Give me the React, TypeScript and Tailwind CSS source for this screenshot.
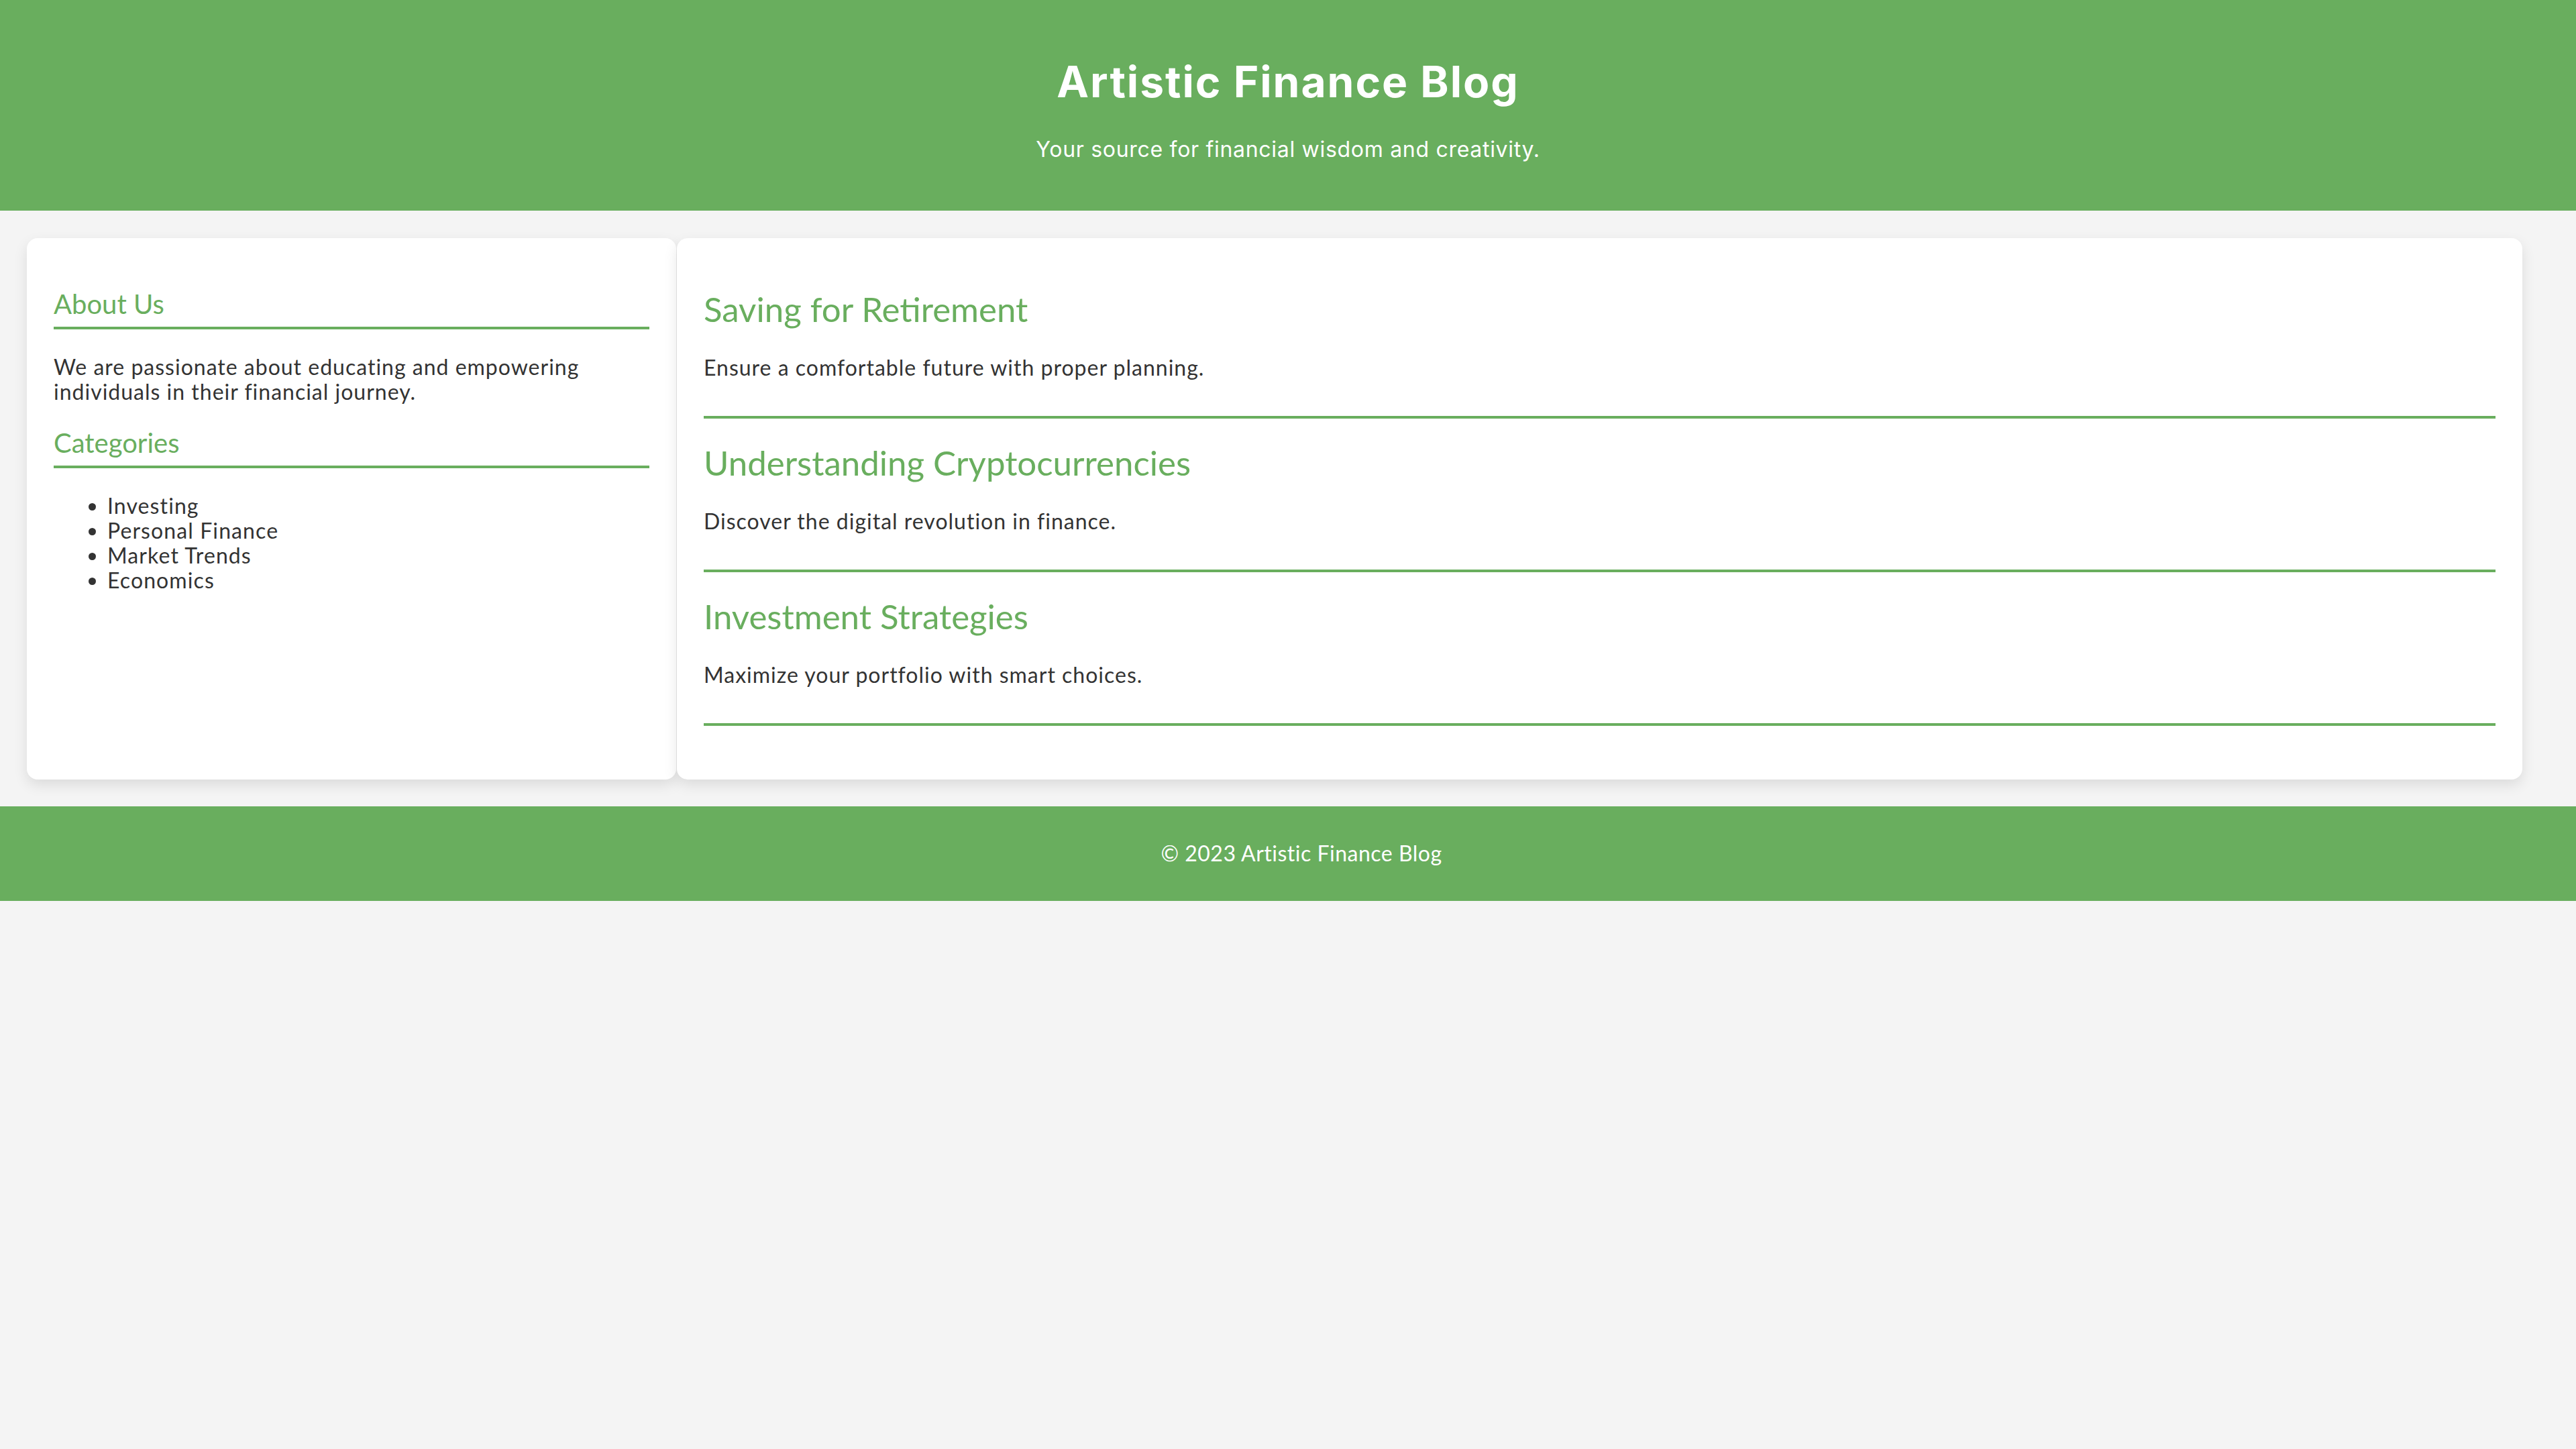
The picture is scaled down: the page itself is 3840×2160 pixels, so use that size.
const categories = ['Investing', 'Personal Finance', 'Market Trends', 'Economics']

const posts = [
  { title: 'Saving for Retirement', text: 'Ensure a comfortable future with proper planning.' },
  { title: 'Understanding Cryptocurrencies', text: 'Discover the digital revolution in finance.' },
  { title: 'Investment Strategies', text: 'Maximize your portfolio with smart choices.' },
]

const App = () => {
  return (
    <div className="min-h-screen bg-[#f4f4f4] font-['Lato',sans-serif] text-[#333333]">
      <header className="h-[314px] bg-[#69ae5e] pt-[82px] text-center text-white font-['Inter',sans-serif]">
        <h1 className="text-[64px] font-bold leading-[80px] tracking-[2px]">Artistic Finance Blog</h1>
        <p className="mt-[41px] text-[32px] leading-[40px] tracking-[0.7px]">
          Your source for financial wisdom and creativity.
        </p>
      </header>

      <main className="flex gap-[1px] pt-[41px] pb-[40px] pl-[40px] pr-[80px]">
        <aside className="w-[968px] shrink-0 rounded-[16px] bg-white px-[40px] pt-[40px] shadow-[0_8px_20px_rgba(0,0,0,0.1)]">
          <h2 className="mt-[34px] border-b-4 border-[#69ae5e] pb-[10px] text-[40px] leading-[48px] text-[#69ae5e]">
            About Us
          </h2>
          <p className="mt-[37px] text-[32px] leading-[37px] tracking-[1px]">
            We are passionate about educating and empowering individuals in their financial journey.
          </p>
          <h2 className="mt-[34px] border-b-4 border-[#69ae5e] pb-[10px] text-[40px] leading-[48px] text-[#69ae5e]">
            Categories
          </h2>
          <ul className="mt-[37px] list-disc pl-[80px] text-[32px] leading-[37px] tracking-[1.1px]">
            {categories.map((c) => (
              <li key={c}>{c}</li>
            ))}
          </ul>
        </aside>

        <section className="flex-1 rounded-[16px] bg-white px-[40px] pt-[40px] pb-[80px] shadow-[0_8px_20px_rgba(0,0,0,0.1)]">
          {posts.map((post) => (
            <article key={post.title} className="border-b-4 border-[#69ae5e] pb-[54px]">
              <h2 className="mt-[36px] text-[51px] leading-[60px] text-[#69ae5e]">{post.title}</h2>
              <p className="mt-[38px] text-[32px] leading-[37px] tracking-[1px]">{post.text}</p>
            </article>
          ))}
        </section>
      </main>

      <footer className="h-[141px] bg-[#69ae5e] pt-[51px] pl-[40px] text-center text-[32px] leading-[37px] tracking-[0.5px] text-white">
        <p>© 2023 Artistic Finance Blog</p>
      </footer>
    </div>
  )
}

export default App
